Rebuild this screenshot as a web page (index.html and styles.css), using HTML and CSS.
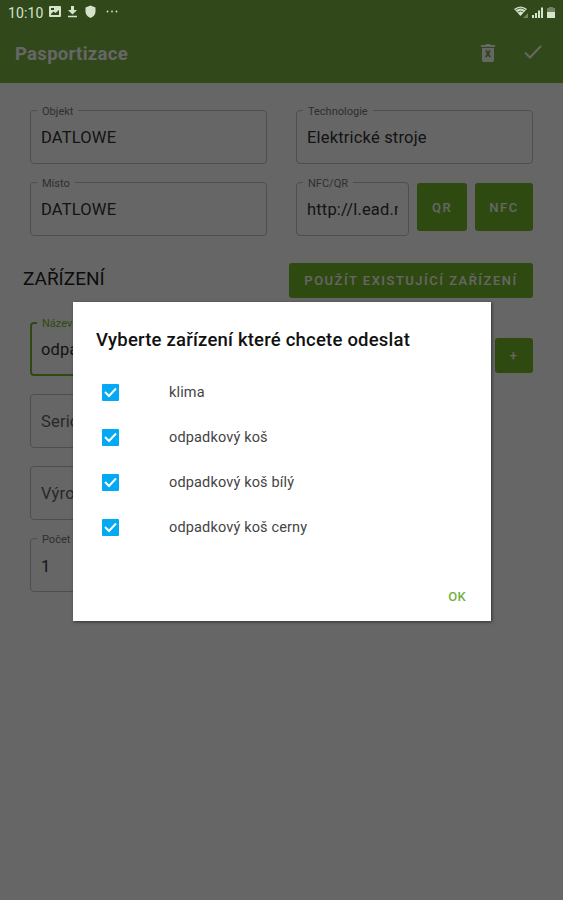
FILE: index.html
```html
<!DOCTYPE html>
<html lang="cs">
<head>
    <meta charset="UTF-8">
    <meta name="viewport" content="width=device-width, initial-scale=1.0">
    <title>Pasportizace</title>
    <link rel="stylesheet" href="styles.css">
</head>
<body>
    <div class="status-bar">
        <span class="clock">10:10</span>
        <svg class="status-left" width="72" height="14" viewBox="0 0 72 14">
            <path fill-rule="evenodd" d="M1 1h10q1 0 1 1v9q0 1-1 1H1q-1 0-1-1V2q0-1 1-1zM2 10h8V5L6.500 8 4.500 6.500 2 9zM2 3v2h3V3z"/>
            <path d="M22 1h3v4h3l-4.500 4.500L19 5h3zM19 10.800h9v1.500h-9z"/>
            <path d="M41.500 0.500l5 2v4q0 4-5 6.500-5-2.500-5-6.500v-4z"/>
            <circle cx="58.500" cy="6.500" r="0.900"/>
            <circle cx="63" cy="6.500" r="0.900"/>
            <circle cx="67.500" cy="6.500" r="0.900"/>
        </svg>
        <svg class="status-right" width="42" height="13" viewBox="0 0 42 13">
            <path d="M0 3Q6.500-2 13 3L6.500 10z"/>
            <path class="arcs" d="M1.500 4.200q5-4 10 0M3.500 6.200q3-2.500 6 0"/>
            <path class="dim" d="M9 12l5-5v5z"/>
            <path d="M18 9h2v3h-2zM21 7h2v5h-2zM24 4.500h2V12h-2zM27 1.500h2V12h-2z"/>
            <path class="dim" d="M35 1h4v1h2v5h-8V2h2z"/>
            <path d="M33 6h8v6h-8z"/>
        </svg>
    </div>

    <header class="app-bar">
        <h1>Pasportizace</h1>
        <svg class="delete-icon" width="16" height="20" viewBox="0 0 16 20">
            <path fill-rule="evenodd" d="M1 2h4l1-1h4l1 1h4v2H1zM2 5h12v12q0 2-2 2H4q-2 0-2-2zM5.300 8l1.200-1.200L8 8.800l1.500-2L10.700 8 9.200 11l1.800 2.500-1.200 1.200L8 12.800l-1.800 1.900L5 13.500 6.800 11z"/>
        </svg>
        <svg class="check-icon" width="18" height="16" viewBox="0 0 18 16">
            <path d="M1 7.500l5 5L17 1"/>
        </svg>
    </header>

    <main>
        <div class="row">
            <div class="field">
                <label>Objekt</label>
                <span>DATLOWE</span>
            </div>
            <div class="field">
                <label>Technologie</label>
                <span>Elektrické stroje</span>
            </div>
        </div>
        <div class="row">
            <div class="field">
                <label>Místo</label>
                <span>DATLOWE</span>
            </div>
            <div class="code-group">
                <div class="field">
                    <label>NFC/QR</label>
                    <span>http://l.ead.me</span>
                </div>
                <button class="btn btn-qr">QR</button>
                <button class="btn btn-nfc">NFC</button>
            </div>
        </div>

        <div class="section">
            <h2>ZAŘÍZENÍ</h2>
            <button class="btn btn-existing">POUŽÍT EXISTUJÍCÍ ZAŘÍZENÍ</button>
        </div>

        <div class="device">
            <div class="name-row">
                <div class="field active">
                    <label>Název</label>
                    <span>odpad</span>
                </div>
                <button class="btn btn-add">+</button>
            </div>
            <div class="field empty"><span>Seriové</span></div>
            <div class="field empty"><span>Výrobce</span></div>
            <div class="field count">
                <label>Počet</label>
                <span>1</span>
            </div>
        </div>
    </main>

    <div class="overlay">
        <div class="dialog">
            <h3>Vyberte zařízení které chcete odeslat</h3>
            <ul>
                <li><svg class="checkbox" viewBox="0 0 17 17"><path d="M3 8l4 4L14 4.500"/></svg>klima</li>
                <li><svg class="checkbox" viewBox="0 0 17 17"><path d="M3 8l4 4L14 4.500"/></svg>odpadkový koš</li>
                <li><svg class="checkbox" viewBox="0 0 17 17"><path d="M3 8l4 4L14 4.500"/></svg>odpadkový koš bílý</li>
                <li><svg class="checkbox" viewBox="0 0 17 17"><path d="M3 8l4 4L14 4.500"/></svg>odpadkový koš cerny</li>
            </ul>
            <button class="ok">OK</button>
        </div>
    </div>
</body>
</html>
```
FILE: styles.css
```css
* {
    box-sizing: border-box;
}

body {
    font-family: Roboto, sans-serif;
    margin: 0;
    height: 900px;
    overflow: hidden;
    position: relative;
    background-color: #fff;
    color: #333;
}

h1, h2, h3, ul {
    margin: 0;
    padding: 0;
}

/* stays bright above the overlay */
.status-bar {
    position: relative;
    z-index: 2;
    height: 24px;
    padding: 0 7px 0 8px;
    display: flex;
    align-items: center;
    background-color: #30481a;
    color: #d5e3cb;
    fill: #d5e3cb;
}

.clock {
    font-size: 14px;
    letter-spacing: 0.1px;
    width: 41px;
    padding-top: 1px;
}

.status-right {
    margin-left: auto;
}

.status-right .dim {
    opacity: 0.4;
}

.status-right .arcs {
    fill: none;
    stroke: #30481a;
    stroke-width: 0.8;
}

.app-bar {
    height: 59px;
    padding: 0 21px 0 15px;
    display: flex;
    align-items: center;
    background-color: #78b441;
    color: #fff;
}

.app-bar h1 {
    flex: 1;
    font-size: 18.500px;
    font-weight: 700;
    letter-spacing: 0.3px;
}

.delete-icon {
    fill: #fff;
    margin: -2px 28px 0 0;
}

.check-icon {
    fill: none;
    stroke: #fff;
    stroke-width: 2;
    margin-top: -2px;
}

main {
    padding: 27px 30px 0;
}

.row {
    display: grid;
    grid-template-columns: 237px 237px;
    justify-content: space-between;
    margin-bottom: 18px;
}

.field {
    position: relative;
    height: 54px;
    padding: 0 10px;
    display: flex;
    align-items: center;
    border: 1px solid #c4c4c4;
    border-radius: 4px;
    font-size: 16.500px;
    letter-spacing: 0.18px;
}

.field span {
    overflow: hidden;
    white-space: nowrap;
}

.field label {
    position: absolute;
    top: -6px;
    left: 6px;
    padding: 0 5px;
    background-color: #fff;
    color: #777;
    font-size: 11px;
    letter-spacing: 0;
    line-height: 14px;
}

.field.active {
    border: 2px solid #76b82a;
    padding: 0 9px;
}

.field.active label {
    top: -7px;
    left: 5px;
    color: #76b82a;
}

.field.empty {
    color: #666;
}

.code-group {
    display: flex;
}

.code-group .field {
    width: 113px;
    margin-right: 8px;
}

.btn {
    padding: 0;
    border: none;
    border-radius: 3px;
    background-color: #76b82a;
    color: #fff;
    font-family: inherit;
    font-size: 13px;
    font-weight: 500;
    letter-spacing: 1.500px;
    white-space: nowrap;
}

.btn-qr {
    width: 50px;
    height: 48px;
    margin: 1px 8px 0 0;
}

.btn-nfc {
    width: 58px;
    height: 48px;
    margin-top: 1px;
}

.section {
    display: flex;
    justify-content: space-between;
    align-items: center;
    height: 35px;
    margin: 27px 0 24px -7px;
}

.section h2 {
    font-size: 19px;
    font-weight: 400;
    margin-top: -4px;
    color: #222;
}

.btn-existing {
    width: 244px;
    height: 35px;
}

.device {
    display: grid;
    gap: 18px;
}

.device > .field {
    width: 457px;
}

.name-row {
    display: flex;
    gap: 8px;
}

.name-row .field {
    flex: 1;
}

.field.count {
    padding-top: 3px;
}

.btn-add {
    width: 38px;
    height: 35px;
    margin-top: 16px;
}

.overlay {
    position: absolute;
    inset: 0;
    padding-top: 302px;
    background-color: rgba(0, 0, 0, 0.6);
}

.dialog {
    width: 418px;
    height: 319px;
    margin-left: 73px;
    padding: 26px 17px 11px 23px;
    display: flex;
    flex-direction: column;
    background: #fff;
    box-shadow: 1px 1px 3px rgba(0, 0, 0, 0.5);
}

.dialog h3 {
    font-size: 18.500px;
    font-weight: 500;
    line-height: 24px;
    letter-spacing: 0.21px;
    color: #111;
    white-space: nowrap;
}

.dialog ul {
    margin-top: 18px;
    list-style: none;
}

.dialog li {
    display: flex;
    align-items: center;
    height: 45px;
    padding-left: 6px;
    font-size: 14.500px;
    letter-spacing: 0.15px;
    color: #444;
}

.checkbox {
    width: 17px;
    height: 17px;
    margin-right: 50px;
    border-radius: 1px;
    background-color: #03a9f4;
    fill: none;
    stroke: #fff;
    stroke-width: 2;
}

.ok {
    margin-top: auto;
    align-self: flex-end;
    padding: 6px 8px;
    border: none;
    background: none;
    color: #76b041;
    font-family: inherit;
    font-size: 13px;
    font-weight: 500;
    letter-spacing: 0.3px;
}
```
